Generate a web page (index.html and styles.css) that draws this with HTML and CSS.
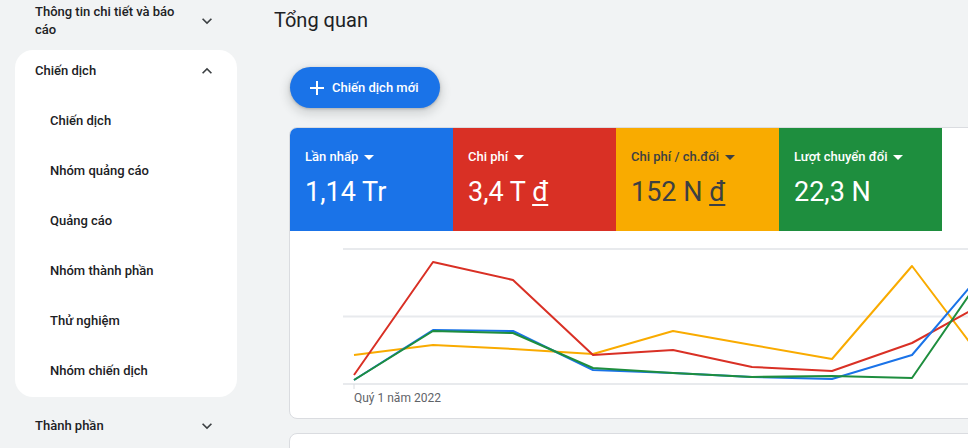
FILE: index.html
```html
<!DOCTYPE html>
<html lang="vi">
<head>
<meta charset="utf-8">
<link rel="stylesheet" href="styles.css">
</head>
<body>
<div class="app">
  <nav class="sidebar">
    <div class="nav-item nav-first">
      <span class="nav-label wrap">Thông tin chi tiết và báo cáo</span>
      <svg class="chev" viewBox="0 0 24 24"><path d="M7.41 8.59 12 13.17l4.59-4.58L18 10l-6 6-6-6z"/></svg>
    </div>
    <div class="panel">
      <div class="panel-head">
        <span class="nav-label">Chiến dịch</span>
        <svg class="chev" viewBox="0 0 24 24"><path d="M7.41 15.41 12 10.83l4.59 4.58L18 14l-6-6-6 6z"/></svg>
      </div>
      <ul class="sub-list">
        <li class="sub-item">Chiến dịch</li>
        <li class="sub-item">Nhóm quảng cáo</li>
        <li class="sub-item">Quảng cáo</li>
        <li class="sub-item">Nhóm thành phần</li>
        <li class="sub-item">Thử nghiệm</li>
        <li class="sub-item">Nhóm chiến dịch</li>
      </ul>
    </div>
    <div class="nav-item nav-last">
      <span class="nav-label">Thành phần</span>
      <svg class="chev" viewBox="0 0 24 24"><path d="M7.41 8.59 12 13.17l4.59-4.58L18 10l-6 6-6-6z"/></svg>
    </div>
  </nav>
  <main class="main">
    <h1 class="title">Tổng quan</h1>
    <button class="fab">
      <svg class="plus" viewBox="0 0 14 14"><path d="M7 0v14M0 7h14" stroke="#fff" stroke-width="2"/></svg>
      <span>Chiến dịch mới</span>
    </button>
    <section class="card">
      <div class="tiles">
        <div class="tile t-blue">
          <div class="tile-label">Lần nhấp <span class="caret"></span></div>
          <div class="tile-value">1,14 Tr</div>
        </div>
        <div class="tile t-red">
          <div class="tile-label">Chi phí <span class="caret"></span></div>
          <div class="tile-value">3,4 T <u>đ</u></div>
        </div>
        <div class="tile t-yellow">
          <div class="tile-label">Chi phí / ch.đối <span class="caret"></span></div>
          <div class="tile-value">152 N <u>đ</u></div>
        </div>
        <div class="tile t-green">
          <div class="tile-label">Lượt chuyển đổi <span class="caret"></span></div>
          <div class="tile-value">22,3 N</div>
        </div>
      </div>
      <div class="chart">
        <svg class="chart-svg" width="700" height="188" viewBox="0 0 700 188">
          <g stroke="#e8eaed" stroke-width="2">
            <line x1="53" y1="18" x2="700" y2="18"/>
            <line x1="53" y1="85.5" x2="700" y2="85.5"/>
            <line x1="53" y1="153" x2="700" y2="153"/>
          </g>
          <line x1="64" y1="153" x2="64" y2="158" stroke="#dadce0" stroke-width="1"/>
          <g fill="none" stroke-width="2" stroke-linejoin="round">
            <polyline stroke="#f9ab00" points="64,124 143,114 223,118 303,123 383,100 462,114 542,128 622,35 702,141"/>
            <polyline stroke="#d93025" points="64,144 143,31 223,49 303,124 383,119 462,136 542,140 622,112 702,68"/>
            <polyline stroke="#1a73e8" points="64,149 143,99 223,100 303,139 383,142 462,146 542,148 622,124 702,30"/>
            <polyline stroke="#1e8e3e" points="64,149 143,100 223,102 303,137 383,142 462,146 542,145 622,147 702,31"/>
          </g>
        </svg>
        <div class="axis-label">Quý 1 năm 2022</div>
      </div>
    </section>
    <section class="card card-2"></section>
  </main>
</div>
</body>
</html>
```

FILE: styles.css
```css
* { box-sizing: border-box; }
html, body {
  margin: 0;
  padding: 0;
  width: 968px;
  height: 448px;
  overflow: hidden;
  background: #f1f3f4;
  font-family: Roboto, "Noto Sans", Arial, sans-serif;
  color: #202124;
}
.app {
  display: flex;
  height: 448px;
}
.sidebar {
  width: 250px;
  flex: none;
  padding: 3px 13px 0 15px;
}
.nav-item {
  display: flex;
  align-items: center;
  padding: 0 20px 0 20px;
}
.nav-first {
  height: 36px;
  margin-bottom: 11px;
}
.nav-last {
  margin-top: 20px;
  height: 18px;
}
.nav-label {
  font-size: 13px;
  font-weight: 500;
  line-height: 18px;
  flex: 1;
}
.nav-label.wrap {
  max-width: 150px;
}
.chev {
  width: 20px;
  height: 20px;
  fill: #3c4043;
  margin-left: auto;
  flex: none;
}
.panel {
  background: #fff;
  border-radius: 18px;
  padding-bottom: 1px;
}
.panel-head {
  display: flex;
  align-items: center;
  height: 42px;
  padding: 0 20px 0 20px;
}
.sub-list {
  list-style: none;
  margin: 4px 0 0;
  padding: 0;
}
.sub-item {
  height: 50px;
  line-height: 50px;
  padding-left: 35px;
  font-size: 13px;
  font-weight: 500;
}
.main {
  flex: 1;
  padding: 0 0 0 24px;
  min-width: 0;
}
.title {
  margin: 0;
  font-size: 20px;
  font-weight: 400;
  line-height: 24px;
  padding-top: 8px;
}
.fab {
  display: flex;
  align-items: center;
  margin: 35px 0 0 16px;
  height: 41px;
  width: 150px;
  padding: 0 0 0 20px;
  border: none;
  border-radius: 21px;
  background: #1a73e8;
  color: #fff;
  font-family: inherit;
  font-size: 13px;
  font-weight: 500;
  box-shadow: 0 1px 3px rgba(60,64,67,.3), 0 4px 8px 3px rgba(60,64,67,.15);
}
.plus {
  width: 14px;
  height: 14px;
  margin-right: 8px;
}
.card {
  margin: 19px 0 0 15px;
  width: 700px;
  background: #fff;
  border: 1px solid #dadce0;
  border-radius: 8px;
  overflow: hidden;
}
.tiles {
  display: flex;
  height: 103px;
}
.tile {
  width: 163px;
  padding: 20px 0 0 15px;
  color: #fff;
}
.t-blue { background: #1a73e8; }
.t-red { background: #d93025; }
.t-yellow { background: #f9ab00; color: #3c4043; }
.t-green { background: #1e8e3e; }
.tile-label {
  font-size: 13px;
  font-weight: 500;
  line-height: 18px;
  display: flex;
  align-items: center;
}
.caret {
  display: inline-block;
  width: 0;
  height: 0;
  margin-left: 6px;
  border-left: 5px solid transparent;
  border-right: 5px solid transparent;
  border-top: 5px solid currentColor;
}
.tile-value {
  font-size: 27px;
  line-height: 32px;
  margin-top: 10px;
}
.tile-value u {
  text-underline-offset: 3px;
  text-decoration-thickness: 2px;
}
.chart {
  position: relative;
  height: 187px;
}
.chart-svg {
  display: block;
}
.axis-label {
  position: absolute;
  left: 64px;
  top: 159px;
  font-size: 12px;
  line-height: 16px;
  color: #5f6368;
}
.card-2 {
  margin-top: 14px;
  height: 40px;
}
```
